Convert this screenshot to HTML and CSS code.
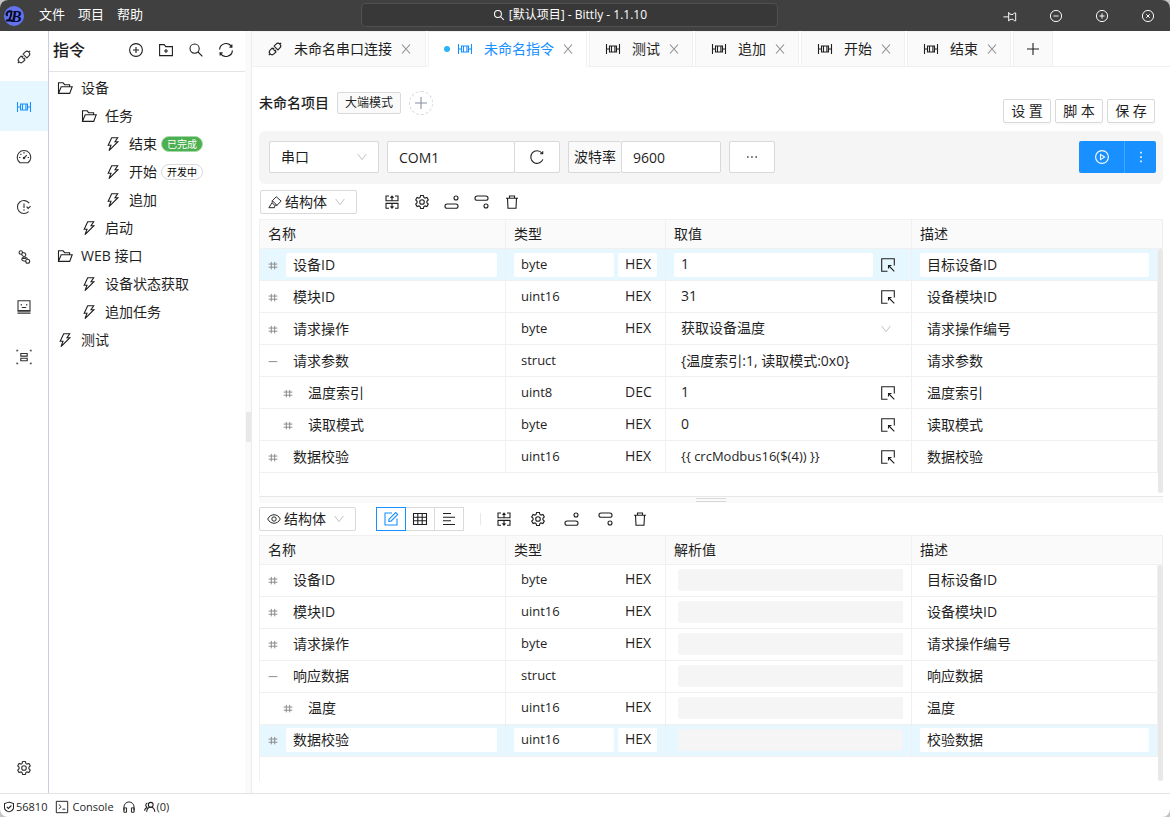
FILE: index.html
```html
<!DOCTYPE html>
<html lang="zh-CN">
<head>
<meta charset="utf-8">
<title>Bittly</title>
<link rel="stylesheet" href="styles.css">
</head>
<body>
<svg class="sprite" aria-hidden="true">
  <symbol id="i-api" viewBox="0 0 16 16"><g transform="rotate(-45 8 8)"><path d="M6.6 5.3H3.8a2.7 2.7 0 0 0 0 5.4h2.8zM9.4 5.3h2.8a2.7 2.7 0 0 1 0 5.4H9.4zM-.8 8h1.9M14.9 8h1.9M6.6 6.7h1.6M6.6 9.3h1.6"/></g></symbol>
  <symbol id="i-cmd" viewBox="0 0 16 16"><path d="M1.5 3v10M14.5 3v10M4.5 5h7v6h-7zM6.5 5v6M9.9 5v6M1.5 8h3M11.5 8h3"/></symbol>
  <symbol id="i-gauge" viewBox="0 0 16 16"><path d="M4 13.8a6.8 6.8 0 1 1 8 0zM8 9l2.8-2.8M8 3v1.5M3 8.5h1.4M11.6 8.5H13M4.5 5l.9.9"/><circle cx="8" cy="9" r=".7"/></symbol>
  <symbol id="i-clock" viewBox="0 0 16 16"><path d="M12.6 12.6A6.5 6.5 0 1 1 13.2 4.200M8 4.500V9M8 10.300v1.400M10.600 7.600l1.600 1.800 2.400-2.200"/></symbol>
  <symbol id="i-branch" viewBox="0 0 16 16"><circle cx="4.800" cy="3.500" r="1.700"/><circle cx="11.700" cy="12.300" r="2"/><path d="M6.500 3.500c2.500 0 3.300 1 3.300 2.600 0 2.200-4 1.700-4 4 0 1.500 1.500 2.200 3.900 2.200M5.500 5.200C6 7 7 7.700 8.600 8c1.800.3 2.800 1 3 2.300M6 9.500h4"/></symbol>
  <symbol id="i-robot" viewBox="0 0 16 16"><path d="M2 1.700h12v9.800H2zM1.500 14.300h13M5.300 5v1.400M10.700 5v1.400M5.800 8.500h4.400M1.500 12.800h13"/></symbol>
  <symbol id="i-scan" viewBox="0 0 16 16"><path d="M4.800 4.500h6.400v2.600H4.800zM4.800 9.200h6.400v2.600H4.800zM1 2.400V1.200h1.200M13.800 1.200H15v1.200M1 13.600v1.200h1.200M13.800 14.800H15v-1.200"/></symbol>
  <symbol id="i-gear" viewBox="0 0 16 16"><path d="M6.1 3.4 6.6 1.5H9.4L9.9 3.4 11 4.05 12.9 3.5 14.3 6 12.9 7.35V8.65L14.3 10 12.9 12.5 11 11.95 9.9 12.6 9.4 14.5H6.6L6.1 12.6 5 11.95 3.1 12.5 1.7 10 3.1 8.65V7.35L1.7 6 3.1 3.5 5 4.05Z"/><circle cx="8" cy="8" r="2.3"/></symbol>
  <symbol id="i-plusc" viewBox="0 0 16 16"><circle cx="8" cy="8" r="6.4"/><path d="M8 5v6M5 8h6"/></symbol>
  <symbol id="i-minusc" viewBox="0 0 16 16"><circle cx="8" cy="8" r="6.4"/><path d="M5 8h6"/></symbol>
  <symbol id="i-closec" viewBox="0 0 16 16"><circle cx="8" cy="8" r="6.4"/><path d="m6 6 4 4M10 6l-4 4"/></symbol>
  <symbol id="i-playc" viewBox="0 0 16 16"><circle cx="8" cy="8" r="6.4"/><path d="M6.5 5.4v5.2L10.6 8z"/></symbol>
  <symbol id="i-folderadd" viewBox="0 0 16 16"><path d="M1.6 2.6h4.6l1.6 2h6.6v9H1.6zM8 7v4M6 9h4"/></symbol>
  <symbol id="i-search" viewBox="0 0 16 16"><circle cx="6.6" cy="6.6" r="4.6"/><path d="m10 10 4.4 4.4"/></symbol>
  <symbol id="i-sync" viewBox="0 0 16 16"><path d="M1.6 7.6A6.4 6.4 0 0 1 13.4 4.5M14.4 8.4A6.4 6.4 0 0 1 2.6 11.5M13.9 2.6v2.5h-2.5M2.1 13.4v-2.5h2.5"/></symbol>
  <symbol id="i-folder" viewBox="0 0 16 16"><path d="M1.5 13.4V2.8h4.6l1.5 1.9h5v2M1.5 13.4 4.2 6.7h11l-2.5 6.7z"/></symbol>
  <symbol id="i-bolt" viewBox="0 0 16 16"><path d="M6.7 1.8h6L10 5.7h2.9L4 14.6l2-5.4H3.2z"/></symbol>
  <symbol id="i-close" viewBox="0 0 16 16"><path d="m4 3.5 8 9M12 3.5l-8 9"/></symbol>
  <symbol id="i-plus" viewBox="0 0 16 16"><path d="M8 2v12M2 8h12"/></symbol>
  <symbol id="i-reload" viewBox="0 0 16 16"><path d="M13.9 10.4A6.3 6.3 0 1 1 12.9 4M13.7 2.3v2.5h-2.5"/></symbol>
  <symbol id="i-down" viewBox="0 0 16 16"><path d="m3 4.5 5 6.5 5-6.5"/></symbol>
  <symbol id="i-brush" viewBox="0 0 16 16"><path d="m9.500 2 5.500 5-4.800 4.800-2.700-.2L4.600 8.900 5 6.500zM5 6.500l5.200 5.300M4.300 9.300 1 14.500h6.200l.8-2.500"/></symbol>
  <symbol id="i-merge" viewBox="0 0 16 16"><path d="M5 2H2v4.800h12V2h-3M5 14.200H2V9.400h12v4.800h-3M8 2v4.800M8 9.400v4.800M6.500 3.800 8 2l1.500 1.800M6.500 12.400 8 14.200l1.500-1.800"/></symbol>
  <symbol id="i-above" viewBox="0 0 16 16"><rect x="1" y="10" width="13" height="4.3" rx="2.1"/><circle cx="12" cy="4" r="2"/></symbol>
  <symbol id="i-below" viewBox="0 0 16 16"><rect x="1" y="2" width="13" height="4.3" rx="2.1"/><circle cx="12" cy="12" r="2"/></symbol>
  <symbol id="i-trash" viewBox="0 0 16 16"><path d="M2 4.2h12M5.5 4V2h5v2M3.500 4.200l.5 10h8l.5-10"/></symbol>
  <symbol id="i-hash" viewBox="0 0 16 16"><path d="M5.300 3v12M10.700 3v12M1 6.500h14M1 11.500h14"/></symbol>
  <symbol id="i-dash" viewBox="0 0 16 16"><path d="M1 9h14"/></symbol>
  <symbol id="i-pick" viewBox="0 0 16 16"><path d="M14.300 8.500V1.700H1.700v12.600H7.500M8.500 8.500l5.800 5.800M8.500 11.500v-3h3"/></symbol>
  <symbol id="i-edit" viewBox="0 0 16 16"><path d="M9 2H2v12h12V7.5M6 8.2 12.7 1.5l2 2L8 10.2l-2.2.2z"/></symbol>
  <symbol id="i-table" viewBox="0 0 16 16"><path d="M1.5 2.5h13v11h-13zM1.5 6.2h13M1.5 9.8h13M5.8 2.5v11M10.2 2.5v11"/></symbol>
  <symbol id="i-align" viewBox="0 0 16 16"><path d="M2 2.5h8M2 6.2h12M2 9.8h8M2 13.5h12"/></symbol>
  <symbol id="i-eye" viewBox="0 0 16 16"><path d="M.8 8C4 1.500 12 1.500 15.200 8 12 14.500 4 14.500.8 8z"/><circle cx="8" cy="8" r="2.5"/></symbol>
  <symbol id="i-morev" viewBox="0 0 16 16"><path d="M8 2v2M8 7v2M8 12v2"/></symbol>
  <symbol id="i-more" viewBox="0 0 16 16"><path d="M2.500 8h1.500M7.200 8h1.500M12 8h1.500"/></symbol>
  <symbol id="i-pin" viewBox="0 0 16 16"><path d="M.5 9h6M6.500 3.500v10.500M6.500 5l2.700 1.200h2.300L13 4.500h1.500v9H13l-1.500-1.700H9.200L6.500 13"/></symbol>
  <symbol id="i-shield" viewBox="0 0 16 16"><path d="M8 1.5 2 3.5V9c0 2.5 3 4.5 6 5.5 3-1 6-3 6-5.500V3.500zM5 7.700l2.200 2.200L11.200 6"/></symbol>
  <symbol id="i-console" viewBox="0 0 16 16"><path d="M1.500 1.500h13v13h-13zM4.300 5 7 7.600 4.300 10.200M8.500 10.500h3.300"/></symbol>
  <symbol id="i-phone" viewBox="0 0 16 16"><path d="M2.200 12V8a5.800 5.800 0 0 1 11.600 0v4M2.200 9h3v5h-3zM10.800 9h3v5h-3z"/></symbol>
  <symbol id="i-team" viewBox="0 0 16 16"><circle cx="9" cy="5" r="3.200"/><path d="M3.500 14.500c.3-3.800 2.300-6.300 5.500-6.300s5.200 2.500 5.500 6.300M4.500 8.600A3.200 3.200 0 0 1 4.500 2.600M.8 13c.2-2.400 1.500-4 3.700-4.400"/></symbol>
</svg>
<div class="window">
  <header class="titlebar">
    <nav class="menu">
      <svg class="logo" viewBox="0 0 20 20" role="img" aria-label="Bittly"><circle class="disc" cx="10" cy="10" r="10"/><text x="7" y="16">B</text><path class="swash" d="M7.500 5.500C4 4.500 1.800 7 3 9.300M7.500 6C7 11 5.500 14.500 2.800 14.500M3 14.500h5"/></svg>
      <button>文件</button><button>项目</button><button>帮助</button>
    </nav>
    <button class="quick"><svg class="ic s12"><use href="#i-search"/></svg>[默认项目] - Bittly - 1.1.10</button>
    <div class="winctl">
      <button aria-label="置顶"><svg class="ic s14"><use href="#i-pin"/></svg></button>
      <button aria-label="最小化"><svg class="ic s14"><use href="#i-minusc"/></svg></button>
      <button aria-label="最大化"><svg class="ic s14"><use href="#i-plusc"/></svg></button>
      <button aria-label="关闭"><svg class="ic s14"><use href="#i-closec"/></svg></button>
    </div>
  </header>
  <div class="body">
    <nav class="rail">
      <button aria-label="连接"><svg class="ic"><use href="#i-api"/></svg></button>
      <button class="on" aria-label="指令"><svg class="ic"><use href="#i-cmd"/></svg></button>
      <button aria-label="面板"><svg class="ic"><use href="#i-gauge"/></svg></button>
      <button aria-label="定时"><svg class="ic"><use href="#i-clock"/></svg></button>
      <button aria-label="流程"><svg class="ic"><use href="#i-branch"/></svg></button>
      <button aria-label="模拟"><svg class="ic"><use href="#i-robot"/></svg></button>
      <button aria-label="结构"><svg class="ic"><use href="#i-scan"/></svg></button>
      <button class="last" aria-label="设置"><svg class="ic"><use href="#i-gear"/></svg></button>
    </nav>
    <aside class="side">
      <div class="side-head">
        <h2>指令</h2>
        <button aria-label="新增"><svg class="ic"><use href="#i-plusc"/></svg></button>
        <button aria-label="新增目录"><svg class="ic"><use href="#i-folderadd"/></svg></button>
        <button aria-label="搜索"><svg class="ic"><use href="#i-search"/></svg></button>
        <button aria-label="刷新"><svg class="ic"><use href="#i-sync"/></svg></button>
      </div>
      <ul class="tree">
        <li><svg class="ic"><use href="#i-folder"/></svg>设备</li>
        <li class="l1"><svg class="ic"><use href="#i-folder"/></svg>任务</li>
        <li class="l2"><svg class="ic"><use href="#i-bolt"/></svg>结束<span class="badge done">已完成</span></li>
        <li class="l2"><svg class="ic"><use href="#i-bolt"/></svg>开始<span class="badge">开发中</span></li>
        <li class="l2"><svg class="ic"><use href="#i-bolt"/></svg>追加</li>
        <li class="l1"><svg class="ic"><use href="#i-bolt"/></svg>启动</li>
        <li><svg class="ic"><use href="#i-folder"/></svg>WEB 接口</li>
        <li class="l1"><svg class="ic"><use href="#i-bolt"/></svg>设备状态获取</li>
        <li class="l1"><svg class="ic"><use href="#i-bolt"/></svg>追加任务</li>
        <li><svg class="ic"><use href="#i-bolt"/></svg>测试</li>
      </ul>
    </aside>
    <div class="vsplit"><i></i></div>
    <main class="main">
      <div class="tabs">
        <div class="tab first"><svg class="ic"><use href="#i-api"/></svg><span>未命名串口连接</span><button aria-label="关闭"><svg class="ic"><use href="#i-close"/></svg></button></div>
        <div class="tab on"><b class="dot"></b><svg class="ic"><use href="#i-cmd"/></svg><span>未命名指令</span><button aria-label="关闭"><svg class="ic"><use href="#i-close"/></svg></button></div>
        <div class="tab"><svg class="ic"><use href="#i-cmd"/></svg><span>测试</span><button aria-label="关闭"><svg class="ic"><use href="#i-close"/></svg></button></div>
        <div class="tab"><svg class="ic"><use href="#i-cmd"/></svg><span>追加</span><button aria-label="关闭"><svg class="ic"><use href="#i-close"/></svg></button></div>
        <div class="tab"><svg class="ic"><use href="#i-cmd"/></svg><span>开始</span><button aria-label="关闭"><svg class="ic"><use href="#i-close"/></svg></button></div>
        <div class="tab"><svg class="ic"><use href="#i-cmd"/></svg><span>结束</span><button aria-label="关闭"><svg class="ic"><use href="#i-close"/></svg></button></div>
        <button class="tab add" aria-label="新标签"><svg class="ic"><use href="#i-plus"/></svg></button>
      </div>
      <div class="content">
        <div class="head">
          <h1>未命名项目</h1><span class="tag">大端模式</span>
          <button class="round" aria-label="添加标签"><svg class="ic"><use href="#i-plus"/></svg></button>
          <div class="actions"><button>设 置</button><button>脚 本</button><button>保 存</button></div>
        </div>
        <div class="conn">
          <div class="pick kind"><select aria-label="连接类型"><option>串口</option></select><svg class="ic s14"><use href="#i-down"/></svg></div>
          <div class="group"><input class="port" aria-label="端口" value="COM1"><button class="sq" aria-label="刷新端口"><svg class="ic"><use href="#i-reload"/></svg></button></div>
          <div class="group"><label for="baud">波特率</label><input id="baud" class="baud" value="9600"></div>
          <button class="sq alone" aria-label="更多"><svg class="ic s14 bold"><use href="#i-more"/></svg></button>
          <div class="run"><button aria-label="运行"><svg class="ic"><use href="#i-playc"/></svg></button><button class="menu-btn" aria-label="更多操作"><svg class="ic s14 bold"><use href="#i-morev"/></svg></button></div>
        </div>
        <div class="tools">
          <button class="mode"><svg class="ic s14"><use href="#i-brush"/></svg>结构体<svg class="ic s14 pale"><use href="#i-down"/></svg></button>
          <div class="icons">
            <button aria-label="合并"><svg class="ic"><use href="#i-merge"/></svg></button>
            <button aria-label="设置"><svg class="ic"><use href="#i-gear"/></svg></button>
            <button aria-label="上方插入"><svg class="ic"><use href="#i-above"/></svg></button>
            <button aria-label="下方插入"><svg class="ic"><use href="#i-below"/></svg></button>
            <button aria-label="删除"><svg class="ic"><use href="#i-trash"/></svg></button>
          </div>
        </div>
        <div class="grid">
          <table>
            <colgroup><col class="c-name"><col class="c-type"><col><col><col class="c-bar"></colgroup>
            <thead><tr><th>名称</th><th>类型</th><th>取值</th><th colspan="2">描述</th></tr></thead>
            <tbody>
              <tr class="sel"><td><div><svg class="ic s10"><use href="#i-hash"/></svg><input aria-label="名称" value="设备ID"></div></td><td><div><select class="type" aria-label="类型"><option>byte</option></select><select class="fmt" aria-label="格式"><option>HEX</option></select></div></td><td><div><input aria-label="取值" value="1"><button aria-label="选择"><svg class="ic"><use href="#i-pick"/></svg></button></div></td><td><div><input aria-label="描述" value="目标设备ID"></div></td><td></td></tr>
              <tr><td><div><svg class="ic s10"><use href="#i-hash"/></svg><input aria-label="名称" value="模块ID"></div></td><td><div><select class="type" aria-label="类型"><option>uint16</option></select><select class="fmt" aria-label="格式"><option>HEX</option></select></div></td><td><div><input aria-label="取值" value="31"><button aria-label="选择"><svg class="ic"><use href="#i-pick"/></svg></button></div></td><td><div><input aria-label="描述" value="设备模块ID"></div></td><td></td></tr>
              <tr><td><div><svg class="ic s10"><use href="#i-hash"/></svg><input aria-label="名称" value="请求操作"></div></td><td><div><select class="type" aria-label="类型"><option>byte</option></select><select class="fmt" aria-label="格式"><option>HEX</option></select></div></td><td><div><select aria-label="取值"><option>获取设备温度</option></select><svg class="ic s14 pale arrow"><use href="#i-down"/></svg></div></td><td><div><input aria-label="描述" value="请求操作编号"></div></td><td></td></tr>
              <tr><td><div><svg class="ic s10"><use href="#i-dash"/></svg><input aria-label="名称" value="请求参数"></div></td><td><div><select class="type" aria-label="类型"><option>struct</option></select></div></td><td><div><span class="text">{温度索引:1, 读取模式:0x0}</span></div></td><td><div><input aria-label="描述" value="请求参数"></div></td><td></td></tr>
              <tr class="sub"><td><div><svg class="ic s10"><use href="#i-hash"/></svg><input aria-label="名称" value="温度索引"></div></td><td><div><select class="type" aria-label="类型"><option>uint8</option></select><select class="fmt" aria-label="格式"><option>DEC</option></select></div></td><td><div><input aria-label="取值" value="1"><button aria-label="选择"><svg class="ic"><use href="#i-pick"/></svg></button></div></td><td><div><input aria-label="描述" value="温度索引"></div></td><td></td></tr>
              <tr class="sub"><td><div><svg class="ic s10"><use href="#i-hash"/></svg><input aria-label="名称" value="读取模式"></div></td><td><div><select class="type" aria-label="类型"><option>byte</option></select><select class="fmt" aria-label="格式"><option>HEX</option></select></div></td><td><div><input aria-label="取值" value="0"><button aria-label="选择"><svg class="ic"><use href="#i-pick"/></svg></button></div></td><td><div><input aria-label="描述" value="读取模式"></div></td><td></td></tr>
              <tr><td><div><svg class="ic s10"><use href="#i-hash"/></svg><input aria-label="名称" value="数据校验"></div></td><td><div><select class="type" aria-label="类型"><option>uint16</option></select><select class="fmt" aria-label="格式"><option>HEX</option></select></div></td><td><div><input class="expr" aria-label="取值" value="{{ crcModbus16($(4)) }}"><button aria-label="选择"><svg class="ic"><use href="#i-pick"/></svg></button></div></td><td><div><input aria-label="描述" value="数据校验"></div></td><td></td></tr>
            </tbody>
          </table>
          <i class="scroll"></i>
        </div>
        <div class="hsplit"><i></i></div>
        <div class="tools second">
          <button class="mode"><svg class="ic s14"><use href="#i-eye"/></svg>结构体<svg class="ic s14 pale"><use href="#i-down"/></svg></button>
          <div class="views"><button class="on" aria-label="编辑"><svg class="ic"><use href="#i-edit"/></svg></button><button aria-label="表格"><svg class="ic"><use href="#i-table"/></svg></button><button aria-label="文本"><svg class="ic"><use href="#i-align"/></svg></button></div>
          <i class="rule"></i>
          <div class="icons wide">
            <button aria-label="合并"><svg class="ic"><use href="#i-merge"/></svg></button>
            <button aria-label="设置"><svg class="ic"><use href="#i-gear"/></svg></button>
            <button aria-label="上方插入"><svg class="ic"><use href="#i-above"/></svg></button>
            <button aria-label="下方插入"><svg class="ic"><use href="#i-below"/></svg></button>
            <button aria-label="删除"><svg class="ic"><use href="#i-trash"/></svg></button>
          </div>
        </div>
        <div class="grid low">
          <table>
            <colgroup><col class="c-name"><col class="c-type"><col><col><col class="c-bar"></colgroup>
            <thead><tr><th>名称</th><th>类型</th><th>解析值</th><th colspan="2">描述</th></tr></thead>
            <tbody>
              <tr><td><div><svg class="ic s10"><use href="#i-hash"/></svg><input aria-label="名称" value="设备ID"></div></td><td><div><select class="type" aria-label="类型"><option>byte</option></select><select class="fmt" aria-label="格式"><option>HEX</option></select></div></td><td><div><span class="blank"></span></div></td><td><div><input aria-label="描述" value="目标设备ID"></div></td><td></td></tr>
              <tr><td><div><svg class="ic s10"><use href="#i-hash"/></svg><input aria-label="名称" value="模块ID"></div></td><td><div><select class="type" aria-label="类型"><option>uint16</option></select><select class="fmt" aria-label="格式"><option>HEX</option></select></div></td><td><div><span class="blank"></span></div></td><td><div><input aria-label="描述" value="设备模块ID"></div></td><td></td></tr>
              <tr><td><div><svg class="ic s10"><use href="#i-hash"/></svg><input aria-label="名称" value="请求操作"></div></td><td><div><select class="type" aria-label="类型"><option>byte</option></select><select class="fmt" aria-label="格式"><option>HEX</option></select></div></td><td><div><span class="blank"></span></div></td><td><div><input aria-label="描述" value="请求操作编号"></div></td><td></td></tr>
              <tr><td><div><svg class="ic s10"><use href="#i-dash"/></svg><input aria-label="名称" value="响应数据"></div></td><td><div><select class="type" aria-label="类型"><option>struct</option></select></div></td><td><div><span class="blank"></span></div></td><td><div><input aria-label="描述" value="响应数据"></div></td><td></td></tr>
              <tr class="sub"><td><div><svg class="ic s10"><use href="#i-hash"/></svg><input aria-label="名称" value="温度"></div></td><td><div><select class="type" aria-label="类型"><option>uint16</option></select><select class="fmt" aria-label="格式"><option>HEX</option></select></div></td><td><div><span class="blank"></span></div></td><td><div><input aria-label="描述" value="温度"></div></td><td></td></tr>
              <tr class="sel"><td><div><svg class="ic s10"><use href="#i-hash"/></svg><input aria-label="名称" value="数据校验"></div></td><td><div><select class="type" aria-label="类型"><option>uint16</option></select><select class="fmt" aria-label="格式"><option>HEX</option></select></div></td><td><div><span class="blank"></span></div></td><td><div><input aria-label="描述" value="校验数据"></div></td><td></td></tr>
            </tbody>
          </table>
          <i class="scroll"></i>
        </div>
      </div>
    </main>
  </div>
  <footer class="status">
    <span><svg class="ic s12"><use href="#i-shield"/></svg>56810</span>
    <button><svg class="ic s14"><use href="#i-console"/></svg>Console</button>
    <button aria-label="客服"><svg class="ic s14"><use href="#i-phone"/></svg></button>
    <span><svg class="ic s12"><use href="#i-team"/></svg>(0)</span>
  </footer>
</div>
</body>
</html>
```
FILE: styles.css
```css
* { box-sizing: border-box; }
body { margin: 0; height: 100vh; background: #c4c4c4; color: #1f1f1f; font: 14px/20px "Open Sans", "Noto Sans CJK SC", sans-serif; overflow: hidden; }
button, input, select { font: inherit; color: inherit; margin: 0; }
button { background: none; border: 0; padding: 0; display: flex; align-items: center; justify-content: center; white-space: nowrap; }
input, select { appearance: none; border: 0; background: none; min-width: 0; border-radius: 2px; }
h1, h2, ul { margin: 0; padding: 0; }
.sprite { position: absolute; width: 0; height: 0; }
.ic { width: 16px; height: 16px; flex: none; fill: none; stroke: currentColor; stroke-width: 1.1; overflow: visible; }
.s14 { width: 14px; height: 14px; }
.s12 { width: 12px; height: 12px; stroke-width: 1.4; }
.s10 { width: 10px; height: 10px; stroke-width: 1.6; }
.bold { stroke-width: 1.8; }
.pale { color: #bfbfbf; }

.window { height: 100%; display: flex; flex-direction: column; background: #fff; border-radius: 8px; overflow: hidden; }
.titlebar { height: 31px; flex: none; background: #404040; color: #fff; display: grid; grid-template-columns: 12fr minmax(0, 417px) 13fr; align-items: center; font-size: 13px; }
.logo { width: 20px; height: 20px; flex: none; }
.logo .disc { fill: #6373ee; }
.logo text { font: italic bold 16px "Liberation Serif", serif; fill: #050a28; }
.logo .swash { fill: none; stroke: #050a28; stroke-width: 2; stroke-linecap: round; }
.menu { display: flex; gap: 13px; margin-left: 4px; align-items: center; }
.menu button { padding-bottom: 3px; }
.menu .logo { margin-right: 2px; }
.quick { height: 24px; margin-bottom: 1px; background: #383838; border: 1px solid #505050; border-radius: 4px; gap: 4px; font-size: 12px; }
.winctl { display: flex; justify-content: flex-end; gap: 32px; padding-right: 15px; }

.body { flex: 1; min-height: 0; display: flex; }
.rail { width: 49px; flex: none; border-right: 1px solid #c9ccda; display: flex; flex-direction: column; }
.rail button { height: 50px; padding-top: 2px; color: #333; }
.rail .on { background: #e6f7ff; color: #1890ff; }
.rail .last { margin-top: auto; padding-top: 0; }
.side { width: 196px; flex: none; }
.side-head { height: 41px; border-bottom: 1px solid #e4e4e4; display: flex; align-items: center; gap: 14px; padding: 0 11px 3px 4px; }
.side-head h2 { font-size: 16px; font-weight: 500; margin-right: auto; }
.tree { list-style: none; padding: 2px 0 0 8px; }
.tree li { height: 28px; display: flex; align-items: center; gap: 8px; }
.tree .l1 { padding-left: 24px; }
.tree .l2 { padding-left: 48px; }
.badge { font-size: 10px; line-height: 14px; padding: 0 5px; border: 1px solid #d9d9d9; border-radius: 8px; margin-left: -4px; color: #000; }
.done { background: #4caf50; border-color: #a5d8a7; color: #fff; }
.vsplit { width: 7px; flex: none; background: #fafafa; border-right: 1px solid #ececec; display: flex; align-items: center; padding-left: 1px; }
.vsplit i { width: 5px; height: 30px; margin-top: 30px; background: #e8e8e8; }

.main { flex: 1; min-width: 0; display: flex; flex-direction: column; }
.tabs { height: 36px; flex: none; display: flex; gap: 2px; border-bottom: 1px solid #f0f0f0; }
.tab { height: 36px; display: flex; align-items: center; background: #fafafa; border: 1px solid #f0f0f0; padding: 0 10px 0 15px; }
.tab span { margin: 0 6px 0 11px; }
.tab button { color: #8c8c8c; }
.first { padding: 0 11px 0 15px; border-left: 0; }
.tab.on { background: #fff; border-bottom-color: #fff; color: #1890ff; }
.dot { width: 6px; height: 6px; border-radius: 50%; background: #29b6f6; margin-right: 7px; }
.tab.add { width: 40px; padding: 0; }
.content { flex: 1; min-height: 0; padding: 0 7px 12px; display: flex; flex-direction: column; }
.head { height: 64px; flex: none; display: flex; align-items: center; gap: 8px; padding-top: 8px; }
.head h1 { font-size: 14px; font-weight: 500; }
.tag { border: 1px solid #d9d9d9; background: #fafafa; border-radius: 2px; font-size: 12px; padding: 0 7px; }
.round { width: 24px; height: 24px; border: 1px dashed #d9d9d9; border-radius: 50%; color: #8a8fa0; }
.actions { margin-left: auto; display: flex; gap: 4px; padding: 16px 8px 0 0; }
.actions button { width: 48px; height: 24px; border: 1px solid #d9d9d9; border-radius: 2px; box-shadow: 0 2px 0 #fafafa; }
.conn { flex: none; background: #f5f5f5; border-radius: 6px; padding: 10px 7px 11px 10px; display: flex; gap: 8px; }
.pick { position: relative; width: 110px; display: flex; }
.pick select { flex: 1; }
.pick .ic { position: absolute; right: 10px; top: 9px; color: #bfbfbf; }
.conn select, .conn input, .sq, .group label { height: 32px; border: 1px solid #d9d9d9; border-radius: 2px; background: #fff; padding: 0 11px; }
.group { display: flex; }
.port { width: 128px; }
.sq { width: 46px; margin-left: -1px; }
.alone { margin-left: 0; }
.group label { width: 53px; line-height: 30px; padding: 0 5px; background: #fafafa; border-right: 0; }
.conn .baud { width: 100px; }
.run { margin-left: auto; display: flex; background: #1890ff; border-radius: 2px; color: #fff; }
.run button { width: 45px; }
.run .menu-btn { width: 32px; border-left: 1px solid #40a9ff; }

.tools { flex: none; display: flex; align-items: center; padding: 6px 1px 5px; }
.mode { width: 97px; height: 24px; border: 1px solid #d9d9d9; border-radius: 2px; gap: 3px; justify-content: flex-start; padding-left: 7px; }
.mode .pale { margin-left: 3px; }
.icons { display: flex; gap: 14px; margin-left: 27px; }
.wide { gap: 18px; margin-left: 15px; }
.second { padding: 4px 0; }
.views { display: flex; margin-left: 20px; }
.views button { width: 30px; height: 24px; border: 1px solid #d9d9d9; margin-right: -1px; }
.views .on { border-color: #1890ff; color: #1890ff; z-index: 1; }
.rule { width: 1px; height: 12px; background: #e8e8e8; margin-left: 17px; }

.grid { position: relative; flex: 275 1 0; min-height: 0; margin-bottom: 3px; border-left: 1px solid #f0f0f0; }
.low { flex-grow: 246; margin-bottom: 0; }
table { width: 100%; table-layout: fixed; border-collapse: separate; border-spacing: 0; }
.c-name { width: 246px; }
.c-type { width: 160px; }
.c-bar { width: 5px; }
th { height: 30px; padding: 0 8px; text-align: left; font-weight: 400; background: #fafafa; border: solid #f0f0f0; border-width: 1px 1px 1px 0; }
td { height: 32px; padding: 0 8px; border: solid #f0f0f0; border-width: 0 1px 1px 0; }
td:last-child { border: 0; padding: 0; }
td div { display: flex; align-items: center; gap: 4px; height: 24px; }
td input, td select { flex: 1; width: 0; height: 24px; padding: 0 7px 2px; }
td .type, td .expr { font-size: 13px; }
td .fmt { flex: none; width: 39px; padding-right: 0; }
td:first-child .ic { color: #8c8c8c; margin-right: 4px; }
td button { width: 16px; margin: 0 7px 0 3px; }
td .arrow { margin-right: 10px; }
.text { padding-left: 7px; white-space: nowrap; }
.sub td:first-child { padding-left: 23px; }
.sel td:not(:last-child) { background: #e6f7ff; }
.sel input, .sel select { background: #fff; }
.blank { flex: 1; height: 22px; margin-left: 4px; background: #f5f5f5; border-radius: 2px; }
.low td div { padding-bottom: 1px; }
.scroll { position: absolute; right: 0; top: 30px; bottom: 0; width: 5px; background: #e8e8e8; border-radius: 2px; }
.hsplit { height: 7px; flex: none; background: #fafafa; border-top: 1px solid #e8e8e8; display: flex; justify-content: center; padding-top: 1px; }
.hsplit i { width: 30px; height: 4px; border: solid #d9d9d9; border-width: 1px 0; }
.status { height: 24px; flex: none; border-top: 1px solid #e4e4e4; display: flex; align-items: center; gap: 8px; padding: 2px 4px 0 3px; font-size: 11px; }
.status span, .status button { display: flex; align-items: center; gap: 1px; }
.status button { gap: 3px; }
```
